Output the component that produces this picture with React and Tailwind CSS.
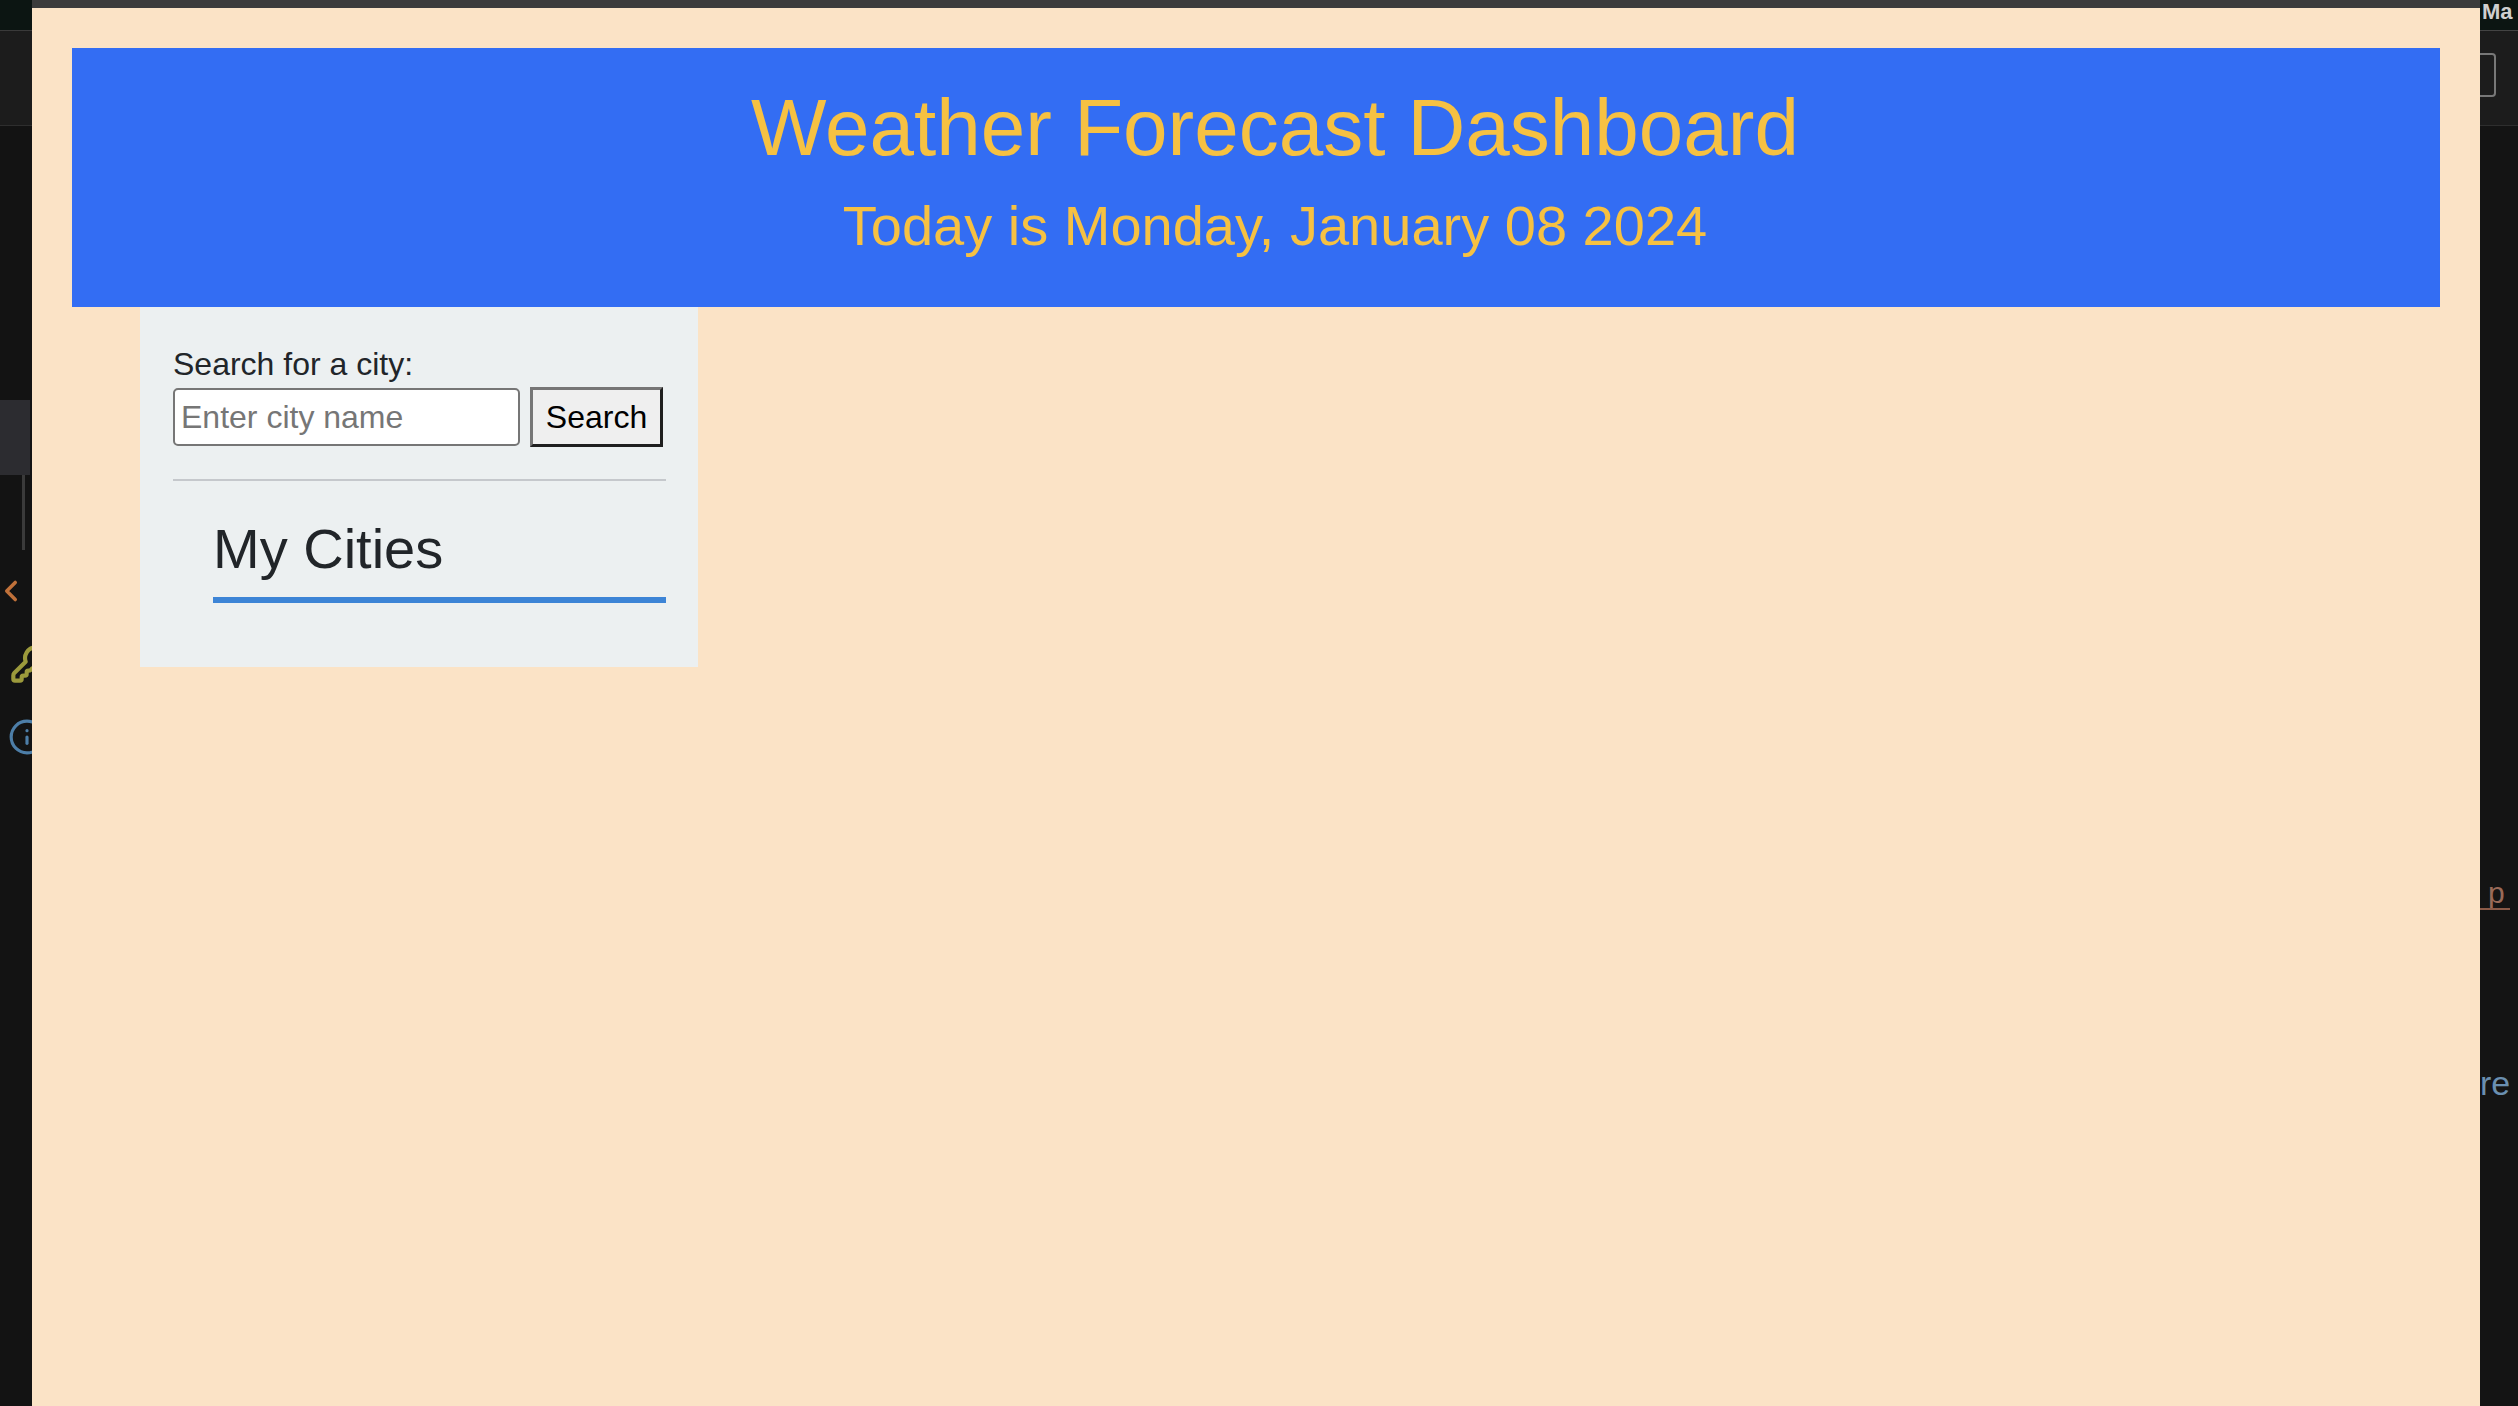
import { Info, ChevronLeft, KeyRound } from 'lucide-react';

const font = { fontFamily: '"Liberation Sans", Arial, sans-serif' };

function LeftEdge() {
  return (
    <div className="flex w-[32px] shrink-0 flex-col overflow-hidden bg-[#131313]">
      <div className="h-[30px] bg-[#0c1512]" />
      <div className="h-px bg-[#3a3a3a]" />
      <div className="h-[94px] bg-[#1c1c1c]" />
      <div className="h-px bg-[#2e2e2e]" />
      <div className="mt-[274px] h-[75px] w-[30px] bg-[#2c2c30]" />
      <div className="ml-[22px] h-[75px] w-[3px] bg-[#3a3a3a]" />
      <ChevronLeft className="mt-[24px] -ml-[6px] h-[34px] w-[34px] shrink-0 text-[#c0713a]" strokeWidth={2.5} />
      <KeyRound className="mt-[36px] ml-[10px] h-[40px] w-[40px] shrink-0 text-[#9c9a3c]" strokeWidth={2.5} />
      <Info className="mt-[34px] ml-[8px] h-[38px] w-[38px] shrink-0 text-[#4d7ea8]" strokeWidth={2} />
    </div>
  );
}

function RightEdge() {
  return (
    <div className="flex w-[38px] shrink-0 flex-col overflow-hidden bg-[#141414]">
      <div className="h-[30px] overflow-hidden bg-[#0c1512] pl-[2px] text-[22px] leading-[24px] font-bold whitespace-nowrap text-[#cfcfcf]" style={font}>
        Ma
      </div>
      <div className="h-px bg-[#444]" />
      <div className="h-[94px] bg-[#1c1c1c] pt-[22px]">
        <div className="h-[44px] w-[16px] rounded-r-[4px] border-2 border-l-0 border-[#777]" />
      </div>
      <div className="h-px bg-[#2e2e2e]" />
      <div className="mt-[752px] h-[30px] pl-[8px] text-[30px] leading-[30px] text-[#9a6a58]" style={font}>
        p
      </div>
      <div className="h-[2px] w-[30px] bg-[#8a5a48]" />
      <div className="mt-[156px] text-[34px] leading-[34px] text-[#6a8fb0]" style={font}>
        re
      </div>
    </div>
  );
}

function Sidebar() {
  return (
    <aside className="ml-[68px] w-[558px] bg-[#ecf0f1] pt-[39px] pr-[32px] pb-[64px] pl-[33px]">
      <label className="block text-[32px] leading-[37px] text-[#212529]">Search for a city:</label>
      <div className="mt-[4px] flex items-center gap-[10px]">
        <input
          type="text"
          placeholder="Enter city name"
          className="h-[58px] w-[347px] rounded-[5px] border-2 border-[#767676] bg-white pl-[6px] text-[32px] text-black outline-none placeholder:text-[#767676]"
          style={font}
        />
        <button
          type="button"
          className="h-[60px] w-[133px] border-[3px] border-t-[#767676] border-l-[#767676] border-b-[#1f1f1f] border-r-[#1f1f1f] bg-[#efefef] text-[32px] leading-none text-black"
          style={font}
        >
          Search
        </button>
      </div>
      <hr className="mt-[32px] border-t-2 border-[#c5c8cc]" />
      <h2 className="mt-[36px] ml-[40px] border-b-[6px] border-[#3c84d6] pb-[16px] text-[56px] leading-[64px] text-[#212529]">
        My Cities
      </h2>
    </aside>
  );
}

export default function App() {
  return (
    <div className="flex h-[1406px] w-full overflow-hidden bg-[#141414]" style={font}>
      <LeftEdge />
      <div className="flex flex-1 flex-col">
        <div className="h-[8px] bg-[#3c3c3c]" />
        <main className="flex-1 bg-[#fbe3c6] px-[40px] pt-[40px]">
          <header className="bg-[#336df3] pt-[34px] pb-[49px] pl-[38px] text-center text-[#f6c142]">
            <h1 className="text-[80px] leading-[92px]">Weather Forecast Dashboard</h1>
            <p className="mt-[20px] text-[56px] leading-[64px]">Today is Monday, January 08 2024</p>
          </header>
          <Sidebar />
        </main>
      </div>
      <RightEdge />
    </div>
  );
}
